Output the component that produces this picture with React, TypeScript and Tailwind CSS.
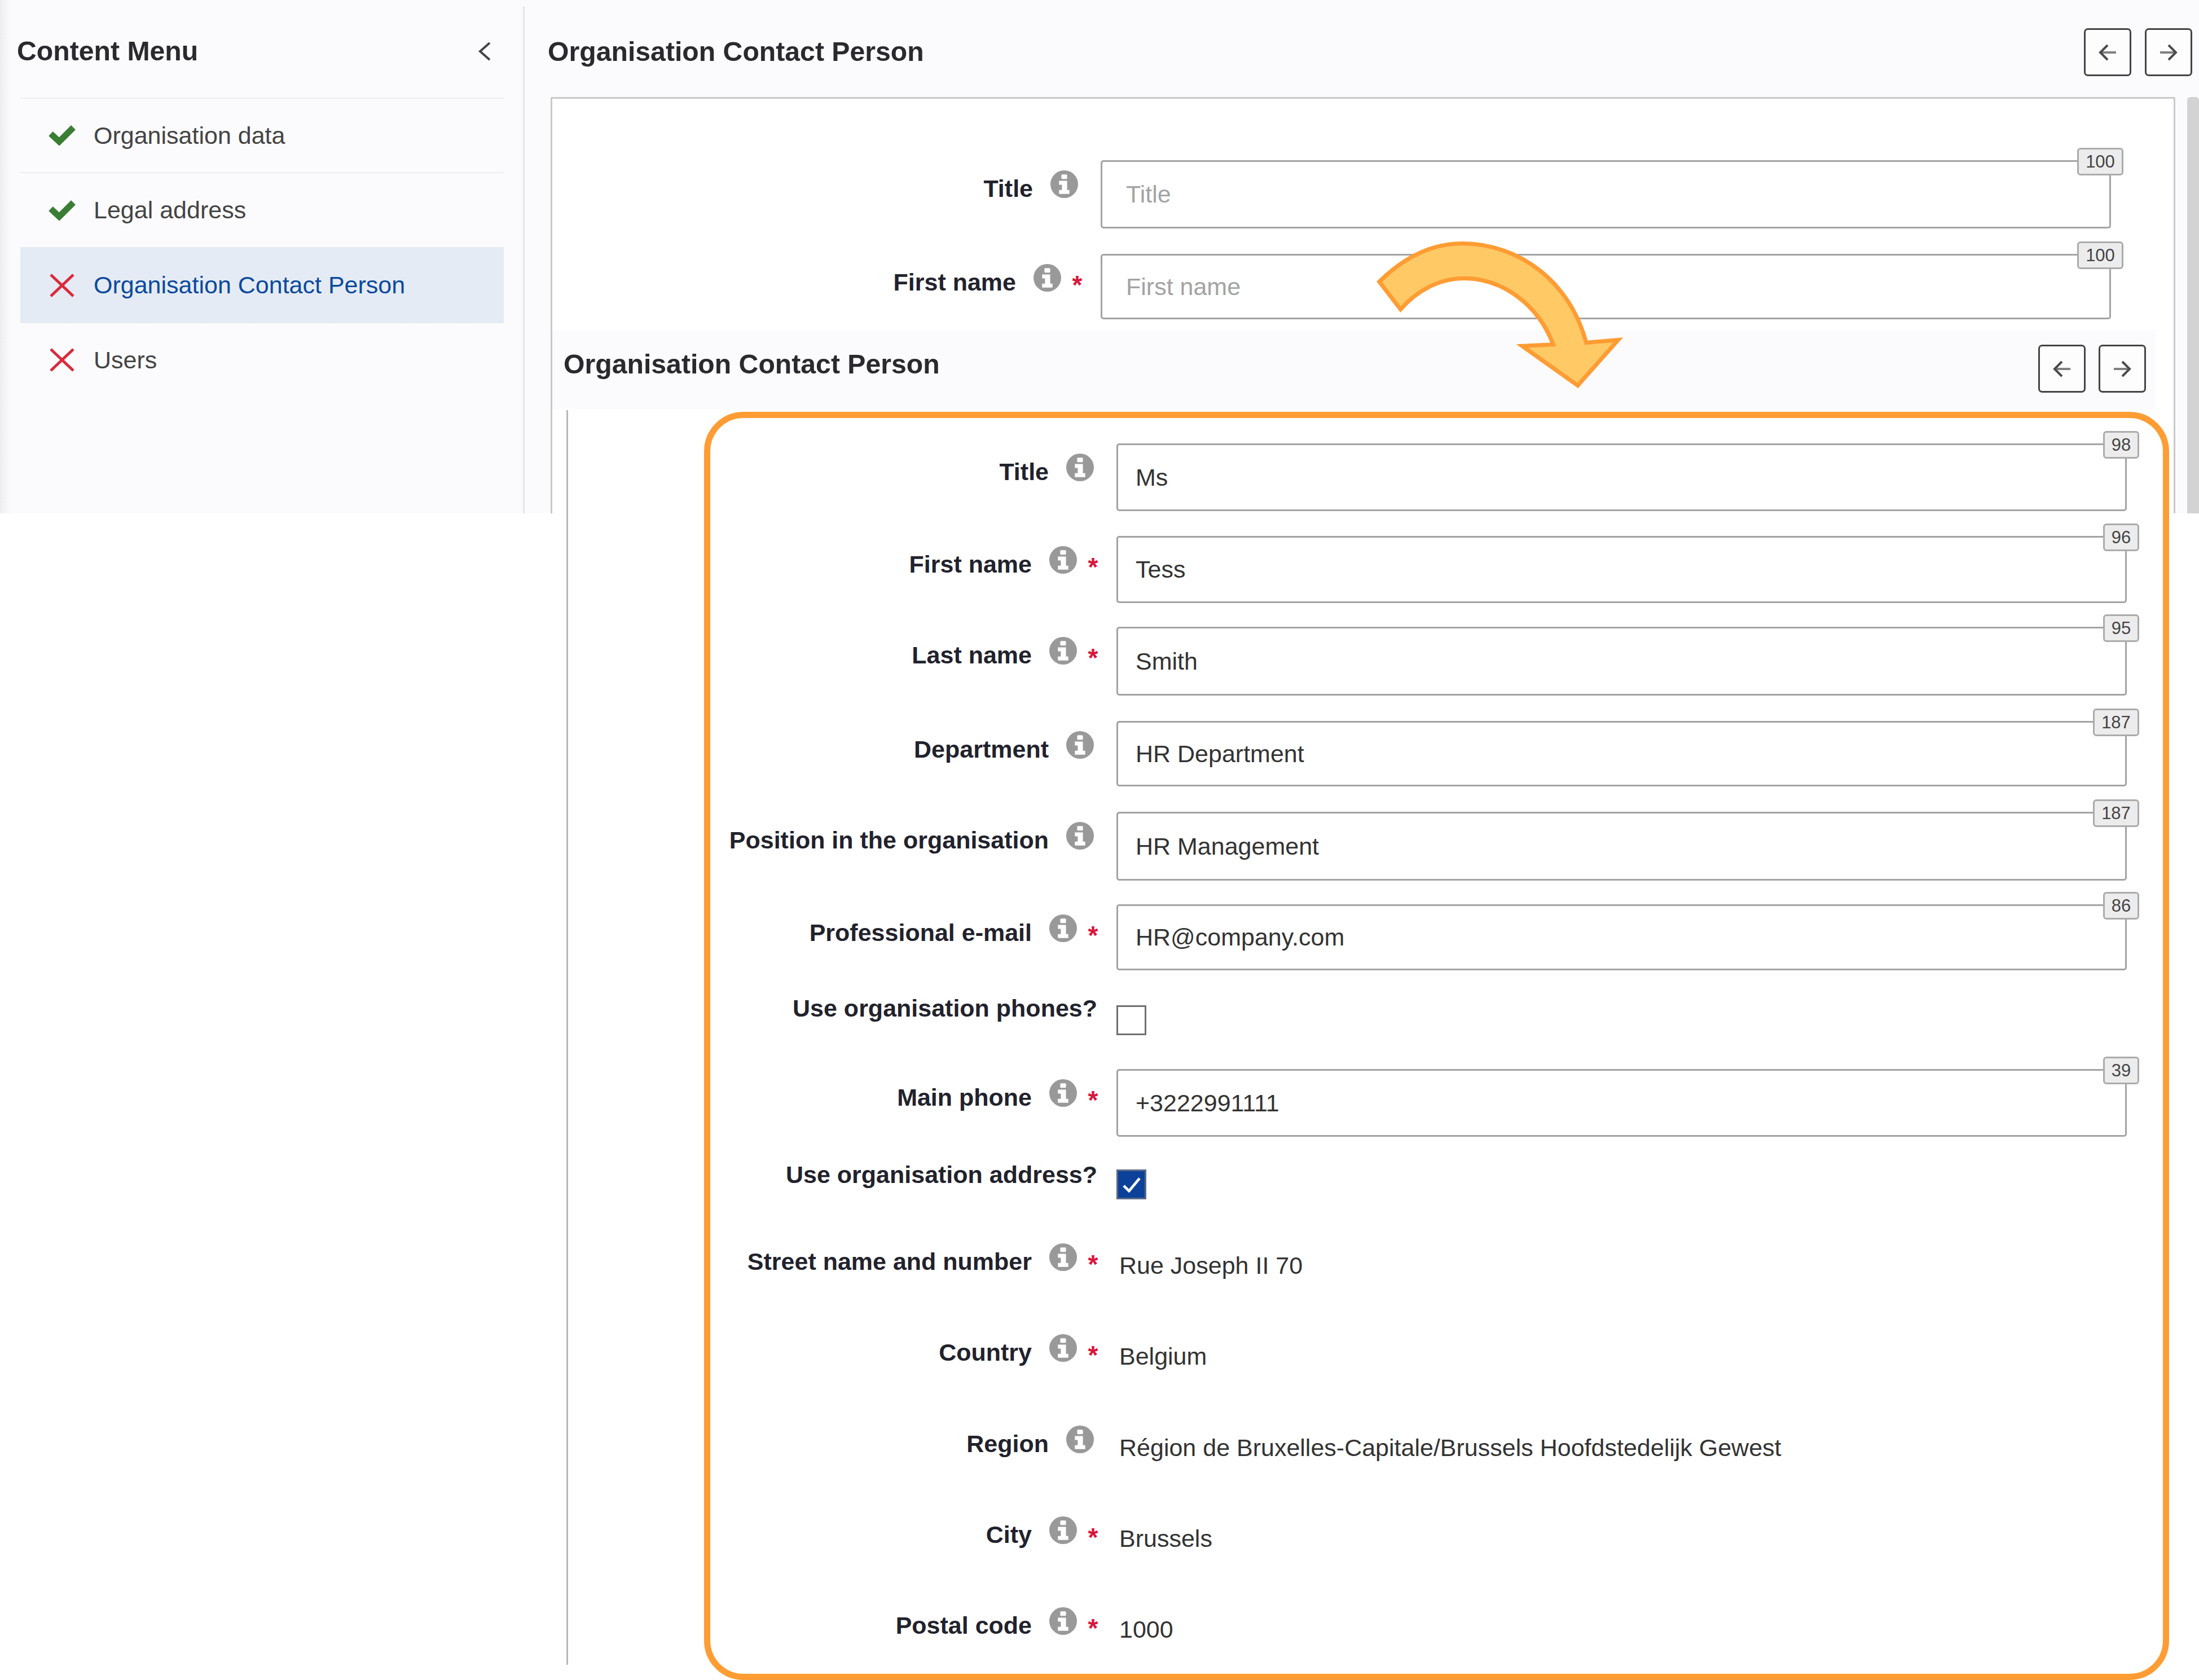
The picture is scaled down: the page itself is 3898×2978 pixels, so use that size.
import type { ReactNode } from "react";

function Check() {
  return (
    <svg viewBox="0 0 48 36" className="h-[36px] w-[48px]" fill="none" stroke="#3a7d34" strokeWidth="11">
      <path d="M4 15 L19 29 L44 4" />
    </svg>
  );
}

function Cross() {
  return (
    <svg viewBox="0 0 48 44" className="h-[44px] w-[48px]" fill="none" stroke="#dc2a3c" strokeWidth="5">
      <path d="M4 3 L44 41 M44 3 L4 41" />
    </svg>
  );
}

function Info() {
  return (
    <svg viewBox="0 0 48 48" className="ml-[31px] -mt-[16px] h-[49px] w-[49px] shrink-0">
      <circle cx="24" cy="24" r="24" fill="#999999" />
      <rect x="19" y="7" width="10" height="8" rx="1.5" fill="#ffffff" />
      <path d="M15 18 H29 V34 H33 V41 H15 V34 H20 V25 H15 Z" fill="#ffffff" />
    </svg>
  );
}

function ArrowBtn({ dir }: { dir: "left" | "right" }) {
  return (
    <div className="flex h-[85px] w-[84px] items-center justify-center rounded-[7px] border-[3px] border-[#444444] bg-[#fdfdfe]">
      <svg viewBox="0 0 32 32" className="h-[32px] w-[32px]" fill="none" strokeWidth="4">
        {dir === "left" ? (
          <>
            <path d="M5 16 H31" stroke="#808080" />
            <path d="M16 3 L3 16 L16 29" stroke="#4a4a4a" />
          </>
        ) : (
          <>
            <path d="M1 16 H27" stroke="#808080" />
            <path d="M16 3 L29 16 L16 29" stroke="#4a4a4a" />
          </>
        )}
      </svg>
    </div>
  );
}

function Field({
  value,
  count,
  placeholder,
  height,
  inset,
}: {
  value: string;
  count: string;
  placeholder?: boolean;
  height: string;
  inset: string;
}) {
  return (
    <div className={`relative flex w-full items-center rounded-[5px] border-[3px] border-[#a3a3a3] bg-white ${height} ${inset} ${placeholder ? "text-[#a3a3a3]" : "text-[#333333]"}`}>
      {value}
      <span
        className={`absolute -right-[25px] -top-[25px] flex h-[49px] items-center justify-center rounded-[6px] border-[3px] border-[#ababab] bg-[#ececec] text-[31px] leading-none text-[#444444] ${count.length > 2 ? "w-[82px]" : "w-[64px]"}`}
      >
        {count}
      </span>
    </div>
  );
}

function Row({
  label,
  info = true,
  required = false,
  rowClass,
  labelWidth,
  children,
}: {
  label: string;
  info?: boolean;
  required?: boolean;
  rowClass: string;
  labelWidth: string;
  children: ReactNode;
}) {
  return (
    <div className={`flex items-start gap-[32px] ${rowClass}`}>
      <div className={`mt-[20px] flex h-[60px] shrink-0 items-center justify-end ${labelWidth} ${info && !required ? "pr-[8px]" : ""} ${!info ? "pr-[2px]" : ""}`}>
        <span className="whitespace-nowrap font-bold text-[#22222c]">{label}</span>
        {info && <Info />}
        {required && (
          <span className="ml-[19px] flex w-[19px] justify-center pt-[10px] text-[46px] font-bold leading-none text-[#d9163c]">*</span>
        )}
      </div>
      {children}
    </div>
  );
}

function Value({ children }: { children: string }) {
  return <div className="mt-[27px] h-[60px] pl-[5px] leading-[60px] text-[#333333]">{children}</div>;
}

const overlayLabel = "w-[940px]";
const overlayField = "pl-[31px]";

export default function App() {
  return (
    <div className="relative h-[2978px] w-[3898px] overflow-hidden bg-white text-[43px] leading-none" style={{ fontFamily: '"Liberation Sans", Arial, sans-serif' }}>
      {/* Background window */}
      <div className="flex h-[910px] bg-[#fbfbfd]">
        <aside className="w-[927px] shrink-0 bg-linear-to-r from-[#eeeef0] to-[#fbfbfd] to-[2%]">
          <div className="flex h-[173px] items-center justify-between pl-[30px] pr-[57px] pt-[8px]">
            <span className="text-[48.2px] font-bold text-[#2a2a2e]">Content Menu</span>
            <svg viewBox="0 0 22 34" className="h-[34px] w-[22px]" fill="none" stroke="#444444" strokeWidth="4">
              <path d="M20 2 L3 17 L20 32" />
            </svg>
          </div>
          <nav className="ml-[36px] w-[857px] border-t-[2px] border-[#eeeef0]">
            <div className="flex h-[132px] items-center gap-[32px] border-b-[2px] border-[#eeeef0] pl-[50px] text-[#444444]">
              <Check />
              <span>Organisation data</span>
            </div>
            <div className="flex h-[131px] items-center gap-[32px] pl-[50px] text-[#444444]">
              <Check />
              <span>Legal address</span>
            </div>
            <div className="flex h-[135px] items-center gap-[32px] bg-[#e5ebf4] pl-[50px] text-[#0b4a9e]">
              <Cross />
              <span>Organisation Contact Person</span>
            </div>
            <div className="flex h-[130px] items-center gap-[32px] pl-[50px] text-[#444444]">
              <Cross />
              <span>Users</span>
            </div>
          </nav>
        </aside>
        <div className="mt-[11px] w-[3px] shrink-0 bg-[#e6e6e8]" />
        <main className="flex min-w-0 flex-1 flex-col">
          <header className="flex h-[172px] shrink-0 items-center justify-between pl-[41px] pr-[12px] pt-[10px]">
            <span className="text-[48.2px] font-bold text-[#2a2a2e]">Organisation Contact Person</span>
            <div className="mt-[3px] flex gap-[24px]">
              <ArrowBtn dir="left" />
              <ArrowBtn dir="right" />
            </div>
          </header>
          <div className="ml-[46px] flex min-h-0 flex-1">
            <section className="min-w-0 flex-1 rounded-t-[3px] border-x-[3px] border-t-[3px] border-[#c9c9c9] bg-white pt-[109px]">
              <Row label="Title" rowClass="h-[166px]" labelWidth="w-[940px]">
                <div className="w-[1791px]">
                  <Field value="Title" count="100" placeholder height="h-[121px]" inset="pl-[42px]" />
                </div>
              </Row>
              <Row label="First name" required rowClass="h-[130px]" labelWidth="w-[940px]">
                <div className="w-[1791px]">
                  <Field value="First name" count="100" placeholder height="h-[116px]" inset="pl-[42px]" />
                </div>
              </Row>
            </section>
            <div className="ml-[21px] w-[21px] shrink-0 rounded-t-[6px] bg-[#d3d3d3]" />
          </div>
        </main>
      </div>

      {/* Second screenshot pasted over the first */}
      <div className="absolute left-[979px] top-[585px] z-10 w-[2842px]">
        <div className="flex h-[140px] items-center justify-between bg-[#fbfbfd] pl-[20px] pr-[17px]">
          <span className="-mt-[20px] text-[48.2px] font-bold text-[#2a2a2e]">Organisation Contact Person</span>
          <div className="-mt-[3px] flex gap-[23px]">
            <ArrowBtn dir="left" />
            <ArrowBtn dir="right" />
          </div>
        </div>
        <div className="ml-[25px] mt-[2px] h-[2224px] border-l-[3px] border-[#b8b8b8] pt-[59px]">
          <Row label="Title" rowClass="h-[164px]" labelWidth={overlayLabel}>
            <div className="w-[1791px]"><Field value="Ms" count="98" height="h-[120px]" inset={overlayField} /></div>
          </Row>
          <Row label="First name" required rowClass="h-[161px]" labelWidth={overlayLabel}>
            <div className="w-[1791px]"><Field value="Tess" count="96" height="h-[119px]" inset={overlayField} /></div>
          </Row>
          <Row label="Last name" required rowClass="h-[167px]" labelWidth={overlayLabel}>
            <div className="w-[1791px]"><Field value="Smith" count="95" height="h-[122px]" inset={overlayField} /></div>
          </Row>
          <Row label="Department" rowClass="h-[161px]" labelWidth={overlayLabel}>
            <div className="w-[1791px]"><Field value="HR Department" count="187" height="h-[116px]" inset={overlayField} /></div>
          </Row>
          <Row label="Position in the organisation" rowClass="h-[164px]" labelWidth={overlayLabel}>
            <div className="w-[1791px]"><Field value="HR Management" count="187" height="h-[122px]" inset={overlayField} /></div>
          </Row>
          <Row label="Professional e-mail" required rowClass="h-[134px]" labelWidth={overlayLabel}>
            <div className="w-[1791px]"><Field value="HR@company.com" count="86" height="h-[117px]" inset={overlayField} /></div>
          </Row>
          <Row label="Use organisation phones?" info={false} rowClass="h-[158px]" labelWidth={overlayLabel}>
            <div className="mt-[45px] h-[53px] w-[53px] border-[3px] border-[#707070] bg-white" />
          </Row>
          <Row label="Main phone" required rowClass="h-[137px]" labelWidth={overlayLabel}>
            <div className="w-[1791px]"><Field value="+3222991111" count="39" height="h-[120px]" inset={overlayField} /></div>
          </Row>
          <Row label="Use organisation address?" info={false} rowClass="h-[154px]" labelWidth={overlayLabel}>
            <div className="mt-[41px] flex h-[53px] w-[53px] items-center justify-center border-[3px] border-[#5a6a86] bg-[#0b4199]">
              <svg viewBox="0 0 36 30" className="h-[28px] w-[34px]" fill="none" stroke="#ffffff" strokeWidth="5">
                <path d="M3 17 L13 27 L33 3" />
              </svg>
            </div>
          </Row>
          <Row label="Street name and number" required rowClass="h-[161px]" labelWidth={overlayLabel}>
            <Value>Rue Joseph II 70</Value>
          </Row>
          <Row label="Country" required rowClass="h-[162px]" labelWidth={overlayLabel}>
            <Value>Belgium</Value>
          </Row>
          <Row label="Region" rowClass="h-[161px]" labelWidth={overlayLabel}>
            <Value>Région de Bruxelles-Capitale/Brussels Hoofdstedelijk Gewest</Value>
          </Row>
          <Row label="City" required rowClass="h-[161px]" labelWidth={overlayLabel}>
            <Value>Brussels</Value>
          </Row>
          <Row label="Postal code" required rowClass="h-[120px]" labelWidth={overlayLabel}>
            <Value>1000</Value>
          </Row>
        </div>
      </div>

      {/* Annotations */}
      <div className="pointer-events-none absolute left-[1248px] top-[730px] z-20 h-[2248px] w-[2597px] rounded-[70px] border-[11px] border-[#ff9c33]" />
      <svg viewBox="0 0 1560 960" className="pointer-events-none absolute left-[2400px] top-[400px] z-20 h-[320px] w-[520px]">
        <path
          d="M135 298 C270 165 420 95 575 95 C880 95 1150 300 1235 622 L1405 608 L1190 850 L895 640 L1060 632 C980 420 790 280 585 280 C460 280 340 340 248 445 Z"
          fill="#ffca66"
          stroke="#ff9c33"
          strokeWidth="22"
        />
      </svg>
    </div>
  );
}
